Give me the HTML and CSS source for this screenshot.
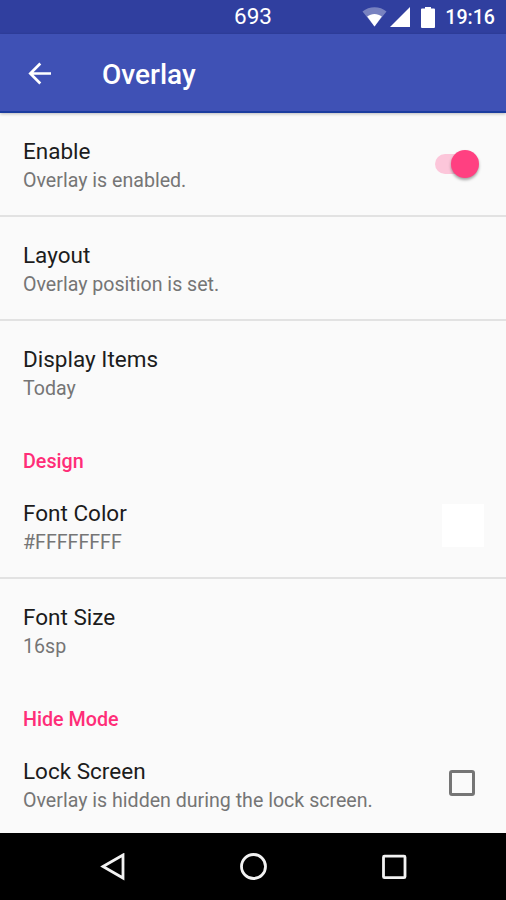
FILE: index.html
```html
<!DOCTYPE html>
<html lang="en">
<head>
  <meta charset="UTF-8" />
  <meta name="viewport" content="width=device-width, initial-scale=1.0"/>
  <title>Overlay</title>
  <link rel="stylesheet" href="styles.css">
</head>

<body>
  <div class="status-bar">
    <span class="steps">693</span>
    <div class="status-icons">
      <svg class="wifi" width="25" height="20" viewBox="0 0 25 20">
        <path d="M0.5 4.5C7-1.2 18-1.2 24.5 4.5L12.5 19.5Z" fill="#fff" fill-opacity=".35"/>
        <path d="M5.2 9.5C9.5 6 15.5 6 19.8 9.5L12.5 19.5Z" fill="#fff"/>
      </svg>
      <svg class="signal" width="20" height="20" viewBox="0 0 20 20">
        <path d="M0 20L20 0V20Z" fill="#fff"/>
      </svg>
      <svg class="battery" width="14" height="21" viewBox="0 0 14 21">
        <path d="M4 0H10V1.5H13Q14 1.5 14 2.5V20Q14 21 13 21H1Q0 21 0 20V2.5Q0 1.5 1 1.5H4Z" fill="#fff"/>
      </svg>
      <span class="clock">19:16</span>
    </div>
  </div>

  <header class="app-bar">
    <svg class="back" width="24" height="24" viewBox="0 0 24 24">
      <path d="M24 12.5H3.5M13.3 2.5L3.3 12.5L13.3 22.5" fill="none" stroke="#fff" stroke-width="2.7"/>
    </svg>
    <h1>Overlay</h1>
  </header>

  <main class="settings">
    <div class="item divider">
      <div class="item-text">
        <div class="title">Enable</div>
        <div class="summary">Overlay is enabled.</div>
      </div>
      <div class="switch"><span class="thumb"></span></div>
    </div>
    <div class="item divider">
      <div class="item-text">
        <div class="title">Layout</div>
        <div class="summary">Overlay position is set.</div>
      </div>
    </div>
    <div class="item">
      <div class="item-text">
        <div class="title">Display Items</div>
        <div class="summary">Today</div>
      </div>
    </div>

    <h2 class="category">Design</h2>
    <div class="item divider">
      <div class="item-text">
        <div class="title">Font Color</div>
        <div class="summary">#FFFFFFFF</div>
      </div>
      <div class="swatch"></div>
    </div>
    <div class="item">
      <div class="item-text">
        <div class="title">Font Size</div>
        <div class="summary">16sp</div>
      </div>
    </div>

    <h2 class="category">Hide Mode</h2>
    <div class="item">
      <div class="item-text">
        <div class="title">Lock Screen</div>
        <div class="summary">Overlay is hidden during the lock screen.</div>
      </div>
      <div class="checkbox"></div>
    </div>
  </main>

  <nav class="nav-bar">
    <svg width="28" height="28" viewBox="0 0 28 28">
      <path d="M4 13.5L24 2V25Z"/>
    </svg>
    <svg width="28" height="28" viewBox="0 0 28 28">
      <circle cx="13.5" cy="13.5" r="12"/>
    </svg>
    <svg width="28" height="28" viewBox="0 0 28 28">
      <rect x="3.5" y="3.2" width="21.5" height="21.5" rx="1"/>
    </svg>
  </nav>
</body>
</html>
```
FILE: styles.css
```css
/* Reset and base */
* { margin:0; padding:0; box-sizing:border-box; }
body {
  height:900px; overflow:hidden;
  display:flex; flex-direction:column;
  font-family:Roboto, "Liberation Sans", sans-serif;
  background:#fafafa; color:#1c1c1c;
}

/* Top bars */
.status-bar {
  height:34px; flex:none;
  display:grid; grid-template-columns:1fr auto 1fr; align-items:center;
  padding:0 11px;
  background:#303f9f; color:#fff;
}
.steps { grid-column:2; font-size:22.5px; line-height:32px; padding-bottom:2px; }
.status-icons { height:34px; display:flex; align-items:center; justify-content:flex-end; }
.signal { margin-left:3px; }
.battery { margin-left:11px; }
.clock { margin-left:10px; padding-top:2px; font-size:19.6px; font-weight:500; line-height:34px; }

.app-bar {
  height:79px; flex:none;
  display:flex; align-items:center;
  padding-left:27px;
  background:#3f51b5; color:#fff;
  border-bottom:2px solid #1b3c9f;
  box-shadow:0 1px 3px rgba(0,0,0,0.25);
}
.app-bar h1 { margin-left:51px; padding-top:3px; font-size:28px; font-weight:500; }

/* Preference list */
.settings { flex:1; min-height:0; }
.item {
  height:103px;
  display:flex; justify-content:space-between;
  padding:24px 22px 0 23px;
}
.item.divider { height:104px; border-bottom:2px solid #e2e2e2; }
.title { font-size:22.5px; line-height:28px; }
.summary { margin-top:1px; font-size:19.6px; line-height:29px; color:#757575; }
.category {
  height:51px; padding:24px 23px 0;
  font-size:19.7px; line-height:28px; font-weight:500; color:#ff2d78;
}

.switch {
  width:43px; height:20px; margin:17px 6px 0 0;
  display:flex; align-items:center; justify-content:flex-end;
  border-radius:10px; background:#fcc6da;
}
.thumb {
  width:28px; height:28px; margin-right:-1px; border-radius:50%;
  background:#ff4081;
  box-shadow:0 2px 3px rgba(0,0,0,0.35);
}
.swatch { width:42px; height:43px; margin-top:5px; background:#fff; }
.checkbox {
  width:26px; height:26px; margin:13px 9px 0 0;
  border:3px solid #757575; border-radius:3px;
}

/* System navigation */
.nav-bar {
  height:67px; flex:none;
  display:flex; justify-content:space-between; align-items:center;
  padding:0 98px 0 99px;
  background:#000;
}
.nav-bar svg { fill:none; stroke:#f2f2f2; stroke-width:2.8; }
```
